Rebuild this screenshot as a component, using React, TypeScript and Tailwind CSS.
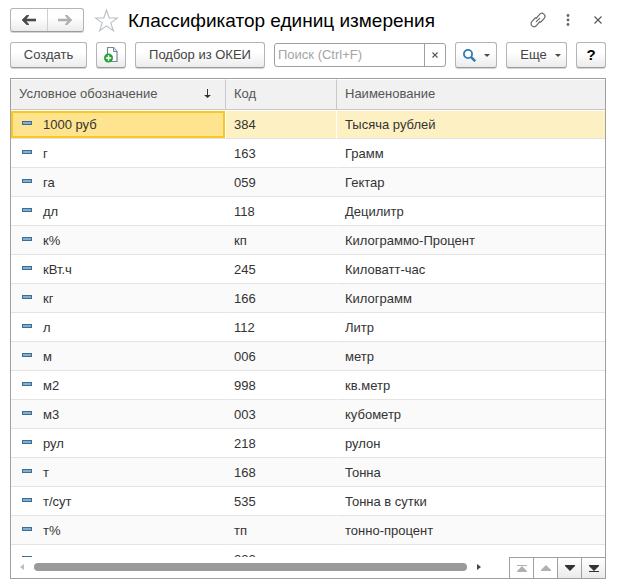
import React from "react";

type Unit = { symbol: string; code: string; name: string };

const units: Unit[] = [
  { symbol: "1000 руб", code: "384", name: "Тысяча рублей" },
  { symbol: "г", code: "163", name: "Грамм" },
  { symbol: "га", code: "059", name: "Гектар" },
  { symbol: "дл", code: "118", name: "Децилитр" },
  { symbol: "к%", code: "кп", name: "Килограммо-Процент" },
  { symbol: "кВт.ч", code: "245", name: "Киловатт-час" },
  { symbol: "кг", code: "166", name: "Килограмм" },
  { symbol: "л", code: "112", name: "Литр" },
  { symbol: "м", code: "006", name: "метр" },
  { symbol: "м2", code: "998", name: "кв.метр" },
  { symbol: "м3", code: "003", name: "кубометр" },
  { symbol: "рул", code: "218", name: "рулон" },
  { symbol: "т", code: "168", name: "Тонна" },
  { symbol: "т/сут", code: "535", name: "Тонна в сутки" },
  { symbol: "т%", code: "тп", name: "тонно-процент" },
  { symbol: "", code: "222", name: "" },
];

const buttonLook =
  "flex h-[26px] shrink-0 items-center justify-center rounded-[3px] border border-[#b4b4b4] border-b-[#9c9c9c] bg-linear-to-b from-white from-40% to-[#ebebeb] shadow-[0_1px_0_#d4d4d4] text-[#444]";

function Caret() {
  return (
    <svg width="6" height="3" viewBox="0 0 6 3" aria-hidden="true">
      <path d="M0 0h6L3 3z" fill="#4a4a4a" />
    </svg>
  );
}

function ArrowIcon({ color, flip }: { color: string; flip?: boolean }) {
  return (
    <svg width="14" height="10" viewBox="0 0 14 10" aria-hidden="true">
      <path
        d={flip ? "M14 5L9 0H7.500v1L10 4H0v2h10L7.500 9v1H9z" : "M0 5l5-5h1.500v1L4 4h10v2H4l2.500 3v1H5z"}
        fill={color}
        stroke={color}
        strokeWidth=".6"
      />
    </svg>
  );
}

function TitleBar() {
  return (
    <header className="flex h-6 items-center">
      <div className="flex h-6 w-[74px] shrink-0 rounded-[3px] border border-[#b4b4b4] border-b-[#9c9c9c] bg-linear-to-b from-white from-40% to-[#ebebeb] shadow-[0_1px_0_#d4d4d4]">
        <button aria-label="Назад" className="flex flex-1 items-center justify-center border-r border-[#cfcfcf]">
          <ArrowIcon color="#4a4a4a" />
        </button>
        <button aria-label="Вперед" className="flex flex-1 items-center justify-center">
          <ArrowIcon color="#b0b0b0" flip />
        </button>
      </div>
      <button aria-label="В избранное" className="ml-[10px] shrink-0">
        <svg width="25" height="24" viewBox="0 0 25 24" aria-hidden="true">
          <path
            d="M12.500 2l2.700 8h8.300l-6.700 4.900 2.600 7.900-6.900-4.900-6.900 4.900 2.600-7.900L1.500 10h8.300z"
            fill="#fff"
            stroke="#b9bfc6"
            strokeWidth="1.100"
          />
        </svg>
      </button>
      <h1 className="ml-[9px] flex-1 whitespace-nowrap pt-[2px] text-[19px] leading-6 text-black">
        Классификатор единиц измерения
      </h1>
      <div className="flex shrink-0 items-center">
        <button aria-label="Получить ссылку">
          <svg width="16" height="16" viewBox="0 0 16 16" fill="none" stroke="#6a6a6a" strokeWidth="1.200" strokeLinecap="round" aria-hidden="true">
            <path d="M6.400 6.200l3-3.600c1.300-1.500 3.100-1.700 4.500-.5 1.400 1.300 1.400 3.100.1 4.500l-2.700 2.900c-.6.600-1.200.8-1.900.8" />
            <path d="M9.600 9.800l-3 3.600c-1.300 1.500-3.100 1.700-4.500.5-1.400-1.300-1.400-3.100-.1-4.500l2.700-2.900c.6-.6 1.200-.8 1.900-.8" />
            <path d="M6.300 9.700l3.400-3.400" />
          </svg>
        </button>
        <button aria-label="Меню" className="ml-5">
          <svg width="4" height="12" viewBox="0 0 4 12" fill="#666" aria-hidden="true">
            <circle cx="2" cy="1.500" r="1.400" />
            <circle cx="2" cy="6" r="1.400" />
            <circle cx="2" cy="10.500" r="1.400" />
          </svg>
        </button>
        <button aria-label="Закрыть" className="ml-6 mr-1">
          <svg width="8" height="8" viewBox="0 0 8 8" stroke="#555" strokeWidth="1.100" aria-hidden="true">
            <path d="M.5.5l7 7M7.500.5l-7 7" />
          </svg>
        </button>
      </div>
    </header>
  );
}

function Toolbar() {
  return (
    <div className="mt-[10px] flex h-[26px] items-center text-[13px]">
      <button className={`${buttonLook} w-[77px]`}>Создать</button>
      <button aria-label="Создать новый" className={`${buttonLook} ml-[9px] w-[30px]`}>
        <svg width="14" height="16" viewBox="0 0 14 16" aria-hidden="true">
          <path d="M3.500.5h6l3.500 4v10H3.500z" fill="#fff" stroke="#73879b" strokeWidth="1.200" />
          <path d="M9.500.5v4H13" fill="#dfe6ec" stroke="#73879b" />
          <circle cx="4.500" cy="11" r="4.500" fill="#27a035" />
          <path d="M4.500 8.300v5.400M1.800 11h5.400" stroke="#fff" strokeWidth="1.500" />
        </svg>
      </button>
      <button className={`${buttonLook} ml-[9px] w-[130px] whitespace-nowrap`}>Подбор из ОКЕИ</button>
      <div className="ml-[9px] flex h-6 min-w-0 flex-1 rounded-[3px] border border-[#a0a0a0] bg-white">
        <input
          type="text"
          aria-label="Поиск"
          placeholder="Поиск (Ctrl+F)"
          className="min-w-0 flex-1 pl-[3px] text-[13px] outline-none placeholder:text-[#a5a5a5]"
        />
        <button aria-label="Очистить" className="flex w-[21px] items-center justify-center border-l border-[#a0a0a0]">
          <svg width="6" height="6" viewBox="0 0 6 6" stroke="#555" strokeWidth="1.200" aria-hidden="true">
            <path d="M.5.5l5 5M5.500.5l-5 5" />
          </svg>
        </button>
      </div>
      <button aria-label="Найти" className={`${buttonLook} ml-[9px] w-[42px] gap-2`}>
        <svg width="13" height="13" viewBox="0 0 13 13" fill="none" stroke="#2f7db3" aria-hidden="true">
          <circle cx="5" cy="5" r="4.100" strokeWidth="1.800" />
          <path d="M7.900 7.900l4.300 4.300" strokeWidth="2.600" />
        </svg>
        <Caret />
      </button>
      <button className={`${buttonLook} ml-[9px] w-[61px] gap-2 pl-2`}>
        Еще
        <Caret />
      </button>
      <button className={`${buttonLook} ml-[9px] w-[30px] text-[15px] font-bold text-black`}>?</button>
    </div>
  );
}

function ItemMark() {
  return (
    <svg width="10" height="4" viewBox="0 0 10 4" className="mb-1 shrink-0" aria-hidden="true">
      <path d="M0 0h10v4H0z" fill="#3f6d91" />
      <path d="M1 1h8v2H1z" fill="#7fb0d4" />
    </svg>
  );
}

const headCell = "border-y border-t-white border-b-[#c8c8c8] bg-[#f1f1f1] p-0 font-normal";

function UnitsTable() {
  return (
    <div className="h-[478px] overflow-hidden">
      <table className="w-full table-fixed border-separate border-spacing-0 text-left text-[13px] text-[#333]">
        <colgroup>
          <col className="w-[215px]" />
          <col className="w-[111px]" />
          <col />
        </colgroup>
        <thead>
          <tr className="h-[31px] text-[#555]">
            <th className={`${headCell} border-r border-r-[#c8c8c8]`}>
              <div className="flex items-center justify-between pb-[2px] pl-2 pr-[14px]">
                Условное обозначение
                <svg width="7" height="9" viewBox="0 0 7 9" aria-hidden="true">
                  <path d="M3 0h1v6h3L3.500 9 0 6h3z" fill="#333" />
                </svg>
              </div>
            </th>
            <th className={`${headCell} border-r border-r-[#c8c8c8]`}>
              <div className="px-2 pb-[2px]">Код</div>
            </th>
            <th className={headCell}>
              <div className="px-2 pb-[2px]">Наименование</div>
            </th>
          </tr>
        </thead>
        <tbody>
          {units.map((unit, index) => {
            const selected = index === 0;
            const cell = selected
              ? "border-y border-t-white border-b-[#e3e3e3] bg-[#fdf1c4]"
              : "border-y border-t-transparent border-b-[#e3e3e3]";
            const divider = selected ? "border-r border-r-white" : "border-r border-r-transparent";
            return (
              <tr key={unit.code} aria-selected={selected} className="h-[29px] even:bg-white odd:bg-[#fafafa]">
                <td className={`p-0 ${cell} ${divider}`}>
                  <div
                    className={
                      selected
                        ? "flex h-[27px] items-center gap-[11px] border-2 border-[#f9c722] bg-[#ffe48f] pl-[9px]"
                        : "flex h-[27px] items-center gap-[11px] pl-[11px]"
                    }
                  >
                    <ItemMark />
                    {unit.symbol}
                  </div>
                </td>
                <td className={`px-2 py-0 ${cell} ${divider}`}>{unit.code}</td>
                <td className={`px-2 py-0 ${cell}`}>{unit.name}</td>
              </tr>
            );
          })}
        </tbody>
      </table>
    </div>
  );
}

const stepButton = "flex w-6 items-center justify-center border-l border-t border-[#a0a0a0]";

function TableFooter() {
  return (
    <div className="flex h-[21px]">
      <div className="flex min-w-0 flex-1 items-center pl-[9px] pr-[28px] pb-[2px]">
        <button aria-label="Прокрутить влево">
          <svg width="4" height="6" viewBox="0 0 4 6" aria-hidden="true">
            <path d="M4 0v6L0 3z" fill="#bdbdbd" />
          </svg>
        </button>
        <div className="ml-[10px] h-2 flex-1 rounded-full bg-[#9a9a9a]" />
        <button aria-label="Прокрутить вправо" className="ml-[10px]">
          <svg width="4" height="6" viewBox="0 0 4 6" aria-hidden="true">
            <path d="M0 0v6l4-3z" fill="#444" />
          </svg>
        </button>
      </div>
      <button aria-label="В начало" className={`${stepButton} bg-white`}>
        <svg width="10" height="7" viewBox="0 0 10 7" fill="#b0b0b0" aria-hidden="true">
          <path d="M0 0h10v1H0zM5 1l5 5v1H0V6z" />
        </svg>
      </button>
      <button aria-label="Выше" className={`${stepButton} bg-white`}>
        <svg width="10" height="6" viewBox="0 0 10 6" fill="#b0b0b0" aria-hidden="true">
          <path d="M5 0l5 5v1H0V5z" />
        </svg>
      </button>
      <button aria-label="Ниже" className={`${stepButton} bg-linear-to-b from-white to-[#ebebeb]`}>
        <svg width="10" height="6" viewBox="0 0 10 6" fill="#333" aria-hidden="true">
          <path d="M0 0h10v1L5 6 0 1z" />
        </svg>
      </button>
      <button aria-label="В конец" className={`${stepButton} bg-linear-to-b from-white to-[#ebebeb]`}>
        <svg width="10" height="7" viewBox="0 0 10 7" fill="#333" aria-hidden="true">
          <path d="M0 0h10v1L5 6 0 1zM0 6h10v1H0z" />
        </svg>
      </button>
    </div>
  );
}

export default function App() {
  return (
    <main className="bg-white pb-[5px] pl-[10px] pr-5 pt-2 font-['Liberation_Sans',Arial,sans-serif]">
      <TitleBar />
      <Toolbar />
      <section className="mt-[10px] border border-[#a0a0a0]">
        <UnitsTable />
        <TableFooter />
      </section>
    </main>
  );
}
